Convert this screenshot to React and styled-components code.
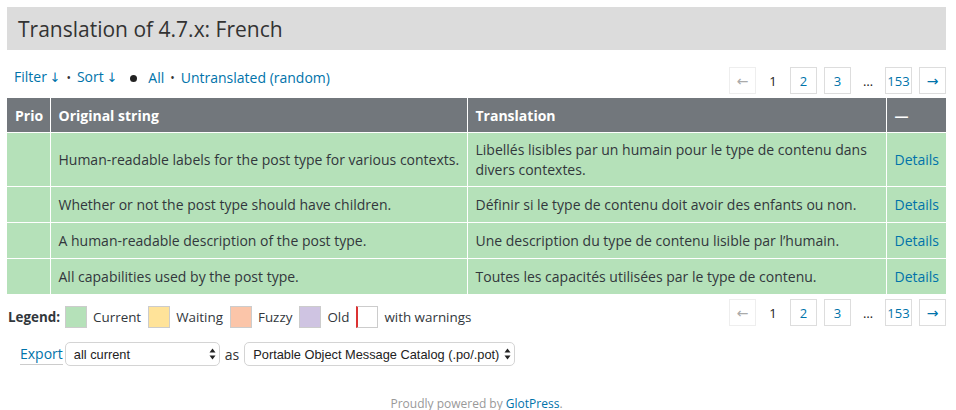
import React from 'react'
import styled, { createGlobalStyle } from 'styled-components'

const GlobalStyle = createGlobalStyle`
  body {
    margin: 0;
    background: #fff;
    font-family: 'Open Sans', 'Liberation Sans', sans-serif;
    font-size: 14px;
    color: #32373c;
  }
`

const Page = styled.div`
  padding: 7px 10px 0 7px;
`

const TitleBar = styled.div`
  background: #dcdcdc;
  height: 43px;
  display: flex;
  align-items: center;
  padding-left: 11px;
`

const Title = styled.h2`
  margin: 0;
  font-size: 21px;
  font-weight: 400;
  color: #333;
`

const Toolbar = styled.div`
  display: flex;
  align-items: flex-start;
  justify-content: space-between;
  margin-top: 17px;
  margin-bottom: 4px;
  padding-left: 7px;
`

const Filters = styled.div`
  display: flex;
  align-items: center;
  gap: 5px;
  font-size: 14px;
  line-height: 20px;
`

const Link = styled.a`
  color: #0073aa;
  text-decoration: none;
`

const Arrow = styled.span`
  font-family: 'DejaVu Sans', sans-serif;
  font-size: 13px;
  margin-left: -1px;
`

const Sep = styled.span`
  color: #333;
  font-size: 12px;
  margin: 0 1px;
`

const Dot = styled.span`
  display: inline-block;
  width: 7px;
  height: 7px;
  border-radius: 50%;
  background: #222;
  margin: 1px 6px 0 8px;
`

const Pager = styled.div`
  display: flex;
  align-items: center;
  gap: 7px;
`

const PageBox = styled.a`
  box-sizing: border-box;
  min-width: 27px;
  height: 27px;
  border: 1px solid ${p => (p.$disabled ? '#eee' : '#ddd')};
  display: flex;
  align-items: center;
  justify-content: center;
  color: ${p => (p.$disabled ? '#aaa' : '#0073aa')};
  font-size: 13px;
  text-decoration: none;
`

const PageArrow = styled.span`
  font-family: 'DejaVu Sans', sans-serif;
  font-size: 14px;
`

const PageText = styled.span`
  min-width: 20px;
  text-align: center;
  font-size: 13px;
  color: #222;
`

const Table = styled.table`
  width: 939px;
  table-layout: fixed;
  border-collapse: collapse;
  font-size: 14px;
`

const Th = styled.th`
  background: #72777c;
  color: #fff;
  font-weight: 700;
  text-align: left;
  height: 34px;
  padding: 0 8px;
  border-left: 1px solid #fff;
  &:first-child { border-left: none; }
`

const Row = styled.tr`
  background: #b5e1b9;
  border-top: 1px solid #fff;
`

const Td = styled.td`
  padding: 7px 4px 6px 8px;
  line-height: 20px;
  height: 22px;
  border-left: 1px solid #fff;
  vertical-align: middle;
  color: #32373c;
  &:first-child { border-left: none; }
`

const Bottom = styled.div`
  display: flex;
  align-items: flex-start;
  justify-content: space-between;
  margin-top: 5px;
`

const Legend = styled.div`
  display: flex;
  align-items: center;
  padding-left: 1px;
  margin-top: 7px;
  font-size: 13.4px;
`

const LegendLabel = styled.strong`
  margin-right: 5px;
`

const Swatch = styled.span`
  box-sizing: border-box;
  display: inline-block;
  width: 22px;
  height: 22px;
  border: 1px solid #ccc;
  background: ${p => p.$color};
  ${p => p.$warn && 'border-left: 2px solid #dc3232;'}
  margin-right: 6px;
`

const LegendText = styled.span`
  margin-right: 7px;
`

const ExportRow = styled.div`
  display: flex;
  align-items: center;
  margin-top: 14px;
  padding-left: 13px;
`

const ExportLink = styled.a`
  color: #0073aa;
  text-decoration: none;
  border-bottom: 1px solid #ccc;
  line-height: 20px;
  margin-right: 2px;
`

const Select = styled.div`
  box-sizing: border-box;
  height: 24px;
  width: ${p => p.$w}px;
  border: 1px solid #d4d4d4;
  border-radius: 5px;
  background: #fff;
  display: flex;
  align-items: center;
  justify-content: space-between;
  padding: 0 3px 0 8px;
  font-family: 'Liberation Sans', Arial, sans-serif;
  font-size: 12.8px;
  color: #222;
  white-space: nowrap;
  overflow: hidden;
`

const Arrows = styled.svg`
  flex: none;
  width: 7px;
  height: 12px;
`

const AsText = styled.span`
  color: #333;
  margin: 0 5px;
`

const Footer = styled.div`
  text-align: center;
  color: #999;
  font-size: 12px;
  line-height: 12px;
  margin-top: 32px;
`

const rows = [
  ['Human-readable labels for the post type for various contexts.', 'Libellés lisibles par un humain pour le type de contenu dans divers contextes.'],
  ['Whether or not the post type should have children.', 'Définir si le type de contenu doit avoir des enfants ou non.'],
  ['A human-readable description of the post type.', 'Une description du type de contenu lisible par l’humain.'],
  ['All capabilities used by the post type.', 'Toutes les capacités utilisées par le type de contenu.'],
]

function Pagination() {
  return (
    <Pager>
      <PageBox $disabled><PageArrow>←</PageArrow></PageBox>
      <PageText>1</PageText>
      <PageBox>2</PageBox>
      <PageBox>3</PageBox>
      <PageText>…</PageText>
      <PageBox>153</PageBox>
      <PageBox><PageArrow>→</PageArrow></PageBox>
    </Pager>
  )
}

function SelectBox({ w, children }) {
  return (
    <Select $w={w}>
      <span>{children}</span>
      <Arrows viewBox="0 0 7 12">
        <path d="M3.5 0.5 L6.5 4.5 L0.5 4.5 Z" fill="#222" />
        <path d="M3.5 11.5 L6.5 7.5 L0.5 7.5 Z" fill="#222" />
      </Arrows>
    </Select>
  )
}

export default function App() {
  return (
    <Page>
      <GlobalStyle />
      <TitleBar>
        <Title>Translation of 4.7.x: French</Title>
      </TitleBar>
      <Toolbar>
        <Filters>
          <Link>Filter <Arrow>↓</Arrow></Link>
          <Sep>•</Sep>
          <Link>Sort <Arrow>↓</Arrow></Link>
          <Dot />
          <Link>All</Link>
          <Sep>•</Sep>
          <Link>Untranslated (random)</Link>
        </Filters>
        <Pagination />
      </Toolbar>
      <Table>
        <colgroup>
          <col style={{ width: 43 }} />
          <col style={{ width: 417 }} />
          <col style={{ width: 419 }} />
          <col style={{ width: 60 }} />
        </colgroup>
        <thead>
          <tr>
            <Th>Prio</Th>
            <Th>Original string</Th>
            <Th>Translation</Th>
            <Th>—</Th>
          </tr>
        </thead>
        <tbody>
          {rows.map(([orig, tr]) => (
            <Row key={orig}>
              <Td />
              <Td>{orig}</Td>
              <Td>{tr}</Td>
              <Td><Link>Details</Link></Td>
            </Row>
          ))}
        </tbody>
      </Table>
      <Bottom>
        <Legend>
          <LegendLabel>Legend:</LegendLabel>
          <Swatch $color="#b5e1b9" />
          <LegendText>Current</LegendText>
          <Swatch $color="#ffe399" />
          <LegendText>Waiting</LegendText>
          <Swatch $color="#fbc5a9" />
          <LegendText>Fuzzy</LegendText>
          <Swatch $color="#cfc4e2" />
          <LegendText>Old</LegendText>
          <Swatch $color="#fff" $warn />
          <LegendText>with warnings</LegendText>
        </Legend>
        <Pagination />
      </Bottom>
      <ExportRow>
        <ExportLink>Export</ExportLink>
        <SelectBox w={155}>all current</SelectBox>
        <AsText>as</AsText>
        <SelectBox w={271}>Portable Object Message Catalog (.po/.pot)</SelectBox>
      </ExportRow>
      <Footer>
        Proudly powered by <Link>GlotPress</Link>.
      </Footer>
    </Page>
  )
}
